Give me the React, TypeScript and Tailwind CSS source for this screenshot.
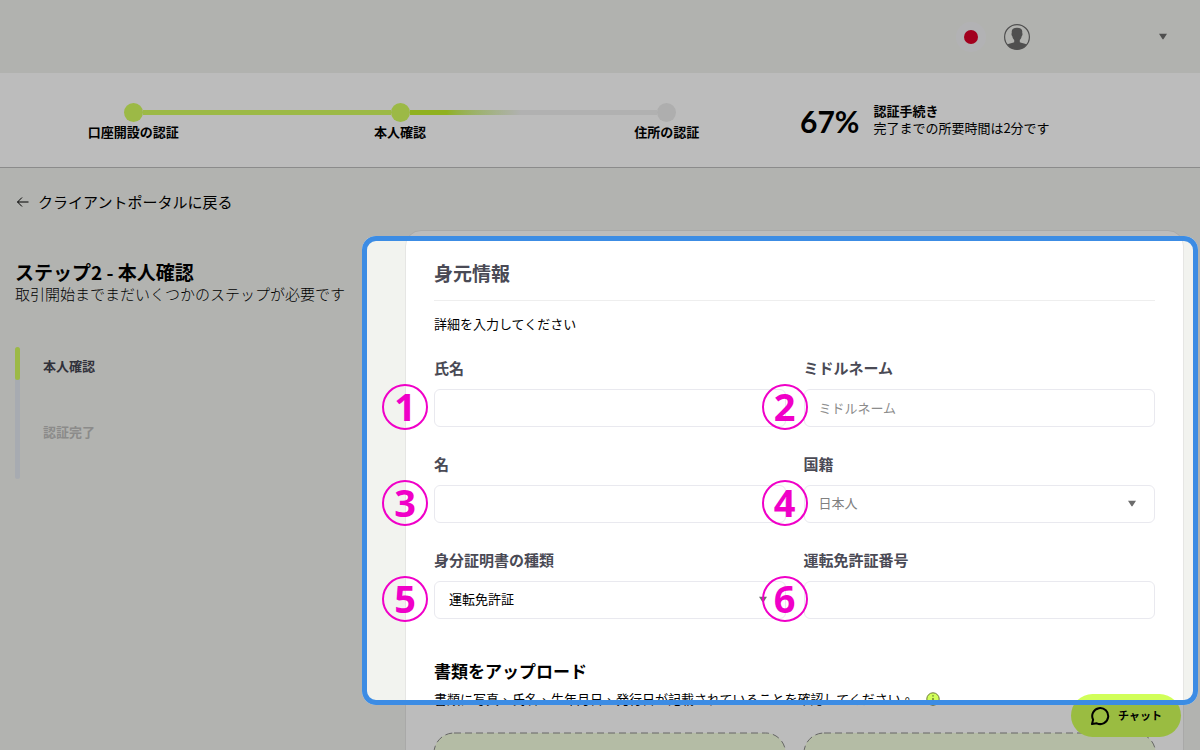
import React, { useState } from "react";
import clsx from "clsx";

const steps = [
  {
    label: "口座開設の認証",
    dot: "bg-[#d4fb5f]",
    before: "bg-transparent",
    after: "bg-[#d4fb5f]",
  },
  {
    label: "本人確認",
    dot: "bg-[#d4fb5f]",
    before: "bg-[#d4fb5f]",
    after: "bg-linear-to-r from-[#c4f02a] from-30% to-[#f0f0f0] to-90%",
  },
  {
    label: "住所の認証",
    dot: "bg-[#ededed]",
    before: "bg-[#f0f0f0]",
    after: "bg-transparent",
  },
];

const fieldStyle =
  "block w-full h-[38px] px-3.5 pb-0.5 rounded-md border border-[#e9e9ef] bg-white text-[13px] appearance-none outline-none placeholder:text-[#8c8c8c]";

const Caret = ({ className }: { className?: string }) => (
  <svg className={className} width="10" height="7" viewBox="0 0 10 7" fill="currentColor">
    <path d="M1 0.800h8L5.600 6a.7.7 0 0 1-1.200 0z" />
  </svg>
);

const Badge = ({ num, left }: { num: number; left: boolean }) => (
  <span
    className={clsx(
      "absolute -top-[5px] z-10 flex h-[46px] w-[46px] items-center justify-center rounded-full border-2 border-[#f000c8] pb-0.5 font-['Noto_Sans',sans-serif] text-[38px] leading-none font-bold text-[#f000c8] pointer-events-none",
      left ? "-left-[52px]" : "-left-[42px]"
    )}
  >
    {num}
  </span>
);

type FieldProps = {
  id: string;
  num: number;
  label: string;
  children: React.ReactNode;
};

const Field = ({ id, num, label, children }: FieldProps) => (
  <div>
    <label htmlFor={id} className="block text-[15px] leading-5 font-bold text-[#4a4a55]">
      {label}
    </label>
    <div className="relative mt-[11px]">
      {children}
      <Badge num={num} left={num % 2 === 1} />
    </div>
  </div>
);

const Header = () => (
  <header className="flex h-[73px] items-center justify-end bg-[#f1f2ee] pr-8">
    <button aria-label="日本語" className="flex h-[30px] w-[30px] items-center justify-center rounded-full bg-[#f2f2f5]">
      <span className="h-3.5 w-3.5 rounded-full bg-[#dc0029]" />
    </button>
    <button aria-label="アカウント" className="ml-[18px] flex items-center text-[#6c6c6c]">
      <svg width="26" height="26" viewBox="0 0 26 26">
        <circle cx="13" cy="13" r="12.4" fill="none" stroke="currentColor" strokeWidth="1.2" />
        <path
          fill="currentColor"
          d="M7.800 9C7.200 5.500 9 3.700 13 3.700S18.800 5.500 18.200 9c.6.400.4 2.600-.5 3.200-.3 1.700-1 3-1.900 3.800v2.200c1.500 1 4.800 1.100 7 2.300A12.400 12.400 0 0 1 13 25.400a12.400 12.400 0 0 1-9.800-4.900c2.200-1.200 5.500-1.300 7-2.300V16c-.9-.8-1.600-2.100-1.900-3.800-.9-.6-1.100-2.800-.5-3.200z"
        />
      </svg>
      <Caret className="ml-32" />
    </button>
  </header>
);

const Progress = () => (
  <section className="flex h-[95px] border-b border-[#bdbdbd] bg-white">
    <ol className="grid w-2/3 grid-cols-3 pt-[30px]">
      {steps.map((step) => (
        <li key={step.label} className="text-center">
          <div className="flex items-center">
            <span className={clsx("h-[5px] flex-1", step.before)} />
            <span className={clsx("h-[19px] w-[19px] rounded-full", step.dot)} />
            <span className={clsx("h-[5px] flex-1", step.after)} />
          </div>
          <p className="text-[13px] leading-5 font-bold">{step.label}</p>
        </li>
      ))}
    </ol>
    <div className="flex items-center gap-3.5">
      <strong className="pt-0.5 font-['Lato'] text-[30px] font-bold">67%</strong>
      <div className="pb-0.5 text-[13px] leading-[17px]">
        <p className="font-bold">認証手続き</p>
        <p>完了までの所要時間は2分です</p>
      </div>
    </div>
  </section>
);

const Sidebar = () => (
  <aside className="w-[405px] shrink-0 pt-[30px] pl-[15px]">
    <h1 className="text-[19px] leading-6 font-bold">ステップ2 - 本人確認</h1>
    <p className="text-[15px] leading-5 font-light">取引開始までまだいくつかのステップが必要です</p>
    <div className="mt-[43px] flex gap-[23px]">
      <div className="w-[5px] rounded-full bg-[#e3e8f0]">
        <div className="h-1/4 rounded-full bg-[#d4fb5f]" />
      </div>
      <ol className="text-[13px] leading-5 font-bold">
        <li className="h-[66px] pt-[9px] text-[#43434f]">本人確認</li>
        <li className="h-[66px] pt-[9px] text-[#bdbdbb]">認証完了</li>
      </ol>
    </div>
  </aside>
);

const DropZone = ({ label }: { label: string }) => (
  <button aria-label={label} className="h-40">
    <svg className="h-full w-full overflow-visible">
      <rect width="100%" height="100%" rx="20" fill="#f5ffe0" stroke="#8a8a8a" strokeDasharray="7 4" />
    </svg>
  </button>
);

const IdentityForm = () => {
  const [lastName, setLastName] = useState("");
  const [middleName, setMiddleName] = useState("");
  const [firstName, setFirstName] = useState("");
  const [licenseNumber, setLicenseNumber] = useState("");

  return (
    <form className="mr-4 flex-1 rounded-t-2xl border border-[#e6e6e4] bg-white px-7 pt-7">
      <h2 className="border-b border-[#eeeeee] pb-[13px] text-[19px] leading-7 font-bold text-[#4a4a55]">身元情報</h2>
      <p className="mt-[13px] text-[13px] leading-5">詳細を入力してください</p>

      <div className="mt-6 grid grid-cols-2 gap-x-[18px] gap-y-[27px]">
        <Field id="lastName" num={1} label="氏名">
          <input id="lastName" className={fieldStyle} value={lastName} onChange={(e) => setLastName(e.target.value)} />
        </Field>
        <Field id="middleName" num={2} label="ミドルネーム">
          <input
            id="middleName"
            className={fieldStyle}
            placeholder="ミドルネーム"
            value={middleName}
            onChange={(e) => setMiddleName(e.target.value)}
          />
        </Field>
        <Field id="firstName" num={3} label="名">
          <input id="firstName" className={fieldStyle} value={firstName} onChange={(e) => setFirstName(e.target.value)} />
        </Field>
        <Field id="nationality" num={4} label="国籍">
          <select id="nationality" className={clsx(fieldStyle, "text-[#808080]")}>
            <option>日本人</option>
          </select>
          <Caret className="absolute top-[15px] right-[18px] text-[#6c6c6c]" />
        </Field>
        <Field id="documentType" num={5} label="身分証明書の種類">
          <select id="documentType" className={fieldStyle}>
            <option>運転免許証</option>
          </select>
          <Caret className="absolute top-[15px] right-[18px] text-[#6c6c6c]" />
        </Field>
        <Field id="licenseNumber" num={6} label="運転免許証番号">
          <input
            id="licenseNumber"
            className={fieldStyle}
            value={licenseNumber}
            onChange={(e) => setLicenseNumber(e.target.value)}
          />
        </Field>
      </div>

      <h3 className="mt-10 text-[17px] leading-6 font-bold">書類をアップロード</h3>
      <p className="mt-1.5 flex items-center gap-3 font-['Noto_Sans_CJK_TC',sans-serif] text-[13px] leading-5">
        書類に写真、氏名、生年月日、発行日が記載されていることを確認してください。
        <svg width="14" height="14" viewBox="0 0 14 14">
          <circle cx="7" cy="7" r="6.2" fill="#d1ff59" stroke="#6f7a3c" />
          <path d="M7 6v4.500M7 3.300v1.200" stroke="#55602a" strokeWidth="1.200" />
        </svg>
      </p>
      <div className="mt-6 grid grid-cols-2 gap-[18px]">
        <DropZone label="表面" />
        <DropZone label="裏面" />
      </div>
    </form>
  );
};

export default function App() {
  return (
    <div className="relative h-screen overflow-hidden bg-[#f2f3ef] font-['Noto_Sans_CJK_JP',sans-serif] text-black">
      <Header />
      <Progress />
      <main>
        <a href="#portal" className="ml-4 mt-[22px] inline-flex items-center gap-2 align-top text-[15px] leading-6">
          <svg width="14" height="12" viewBox="0 0 14 12" fill="none" stroke="currentColor">
            <path d="M6 1.500 1.500 6 6 10.500M1.500 6h11" />
          </svg>
          クライアントポータルに戻る
        </a>
        <div className="mt-4 flex">
          <Sidebar />
          <IdentityForm />
        </div>
      </main>

      <button className="absolute right-[19px] bottom-[13px] flex h-[43px] w-[110px] items-center justify-center gap-2 rounded-full bg-[#d1ff59] text-[11px] font-bold">
        <svg width="20" height="20" viewBox="0 0 20 20" fill="none" stroke="currentColor" strokeWidth="2">
          <path d="M2 18l1.100-4.300A8 8 0 1 1 6.800 17.300z" strokeLinejoin="round" />
        </svg>
        チャット
      </button>

      {/* spotlight: everything outside the frame is dimmed */}
      <div className="pointer-events-none absolute top-[236px] right-0.5 left-[362px] h-[469px] rounded-[14px] border-5 border-[#3c8ce4] shadow-[0_0_0_2000px_rgba(0,0,0,0.263)]" />
    </div>
  );
}
